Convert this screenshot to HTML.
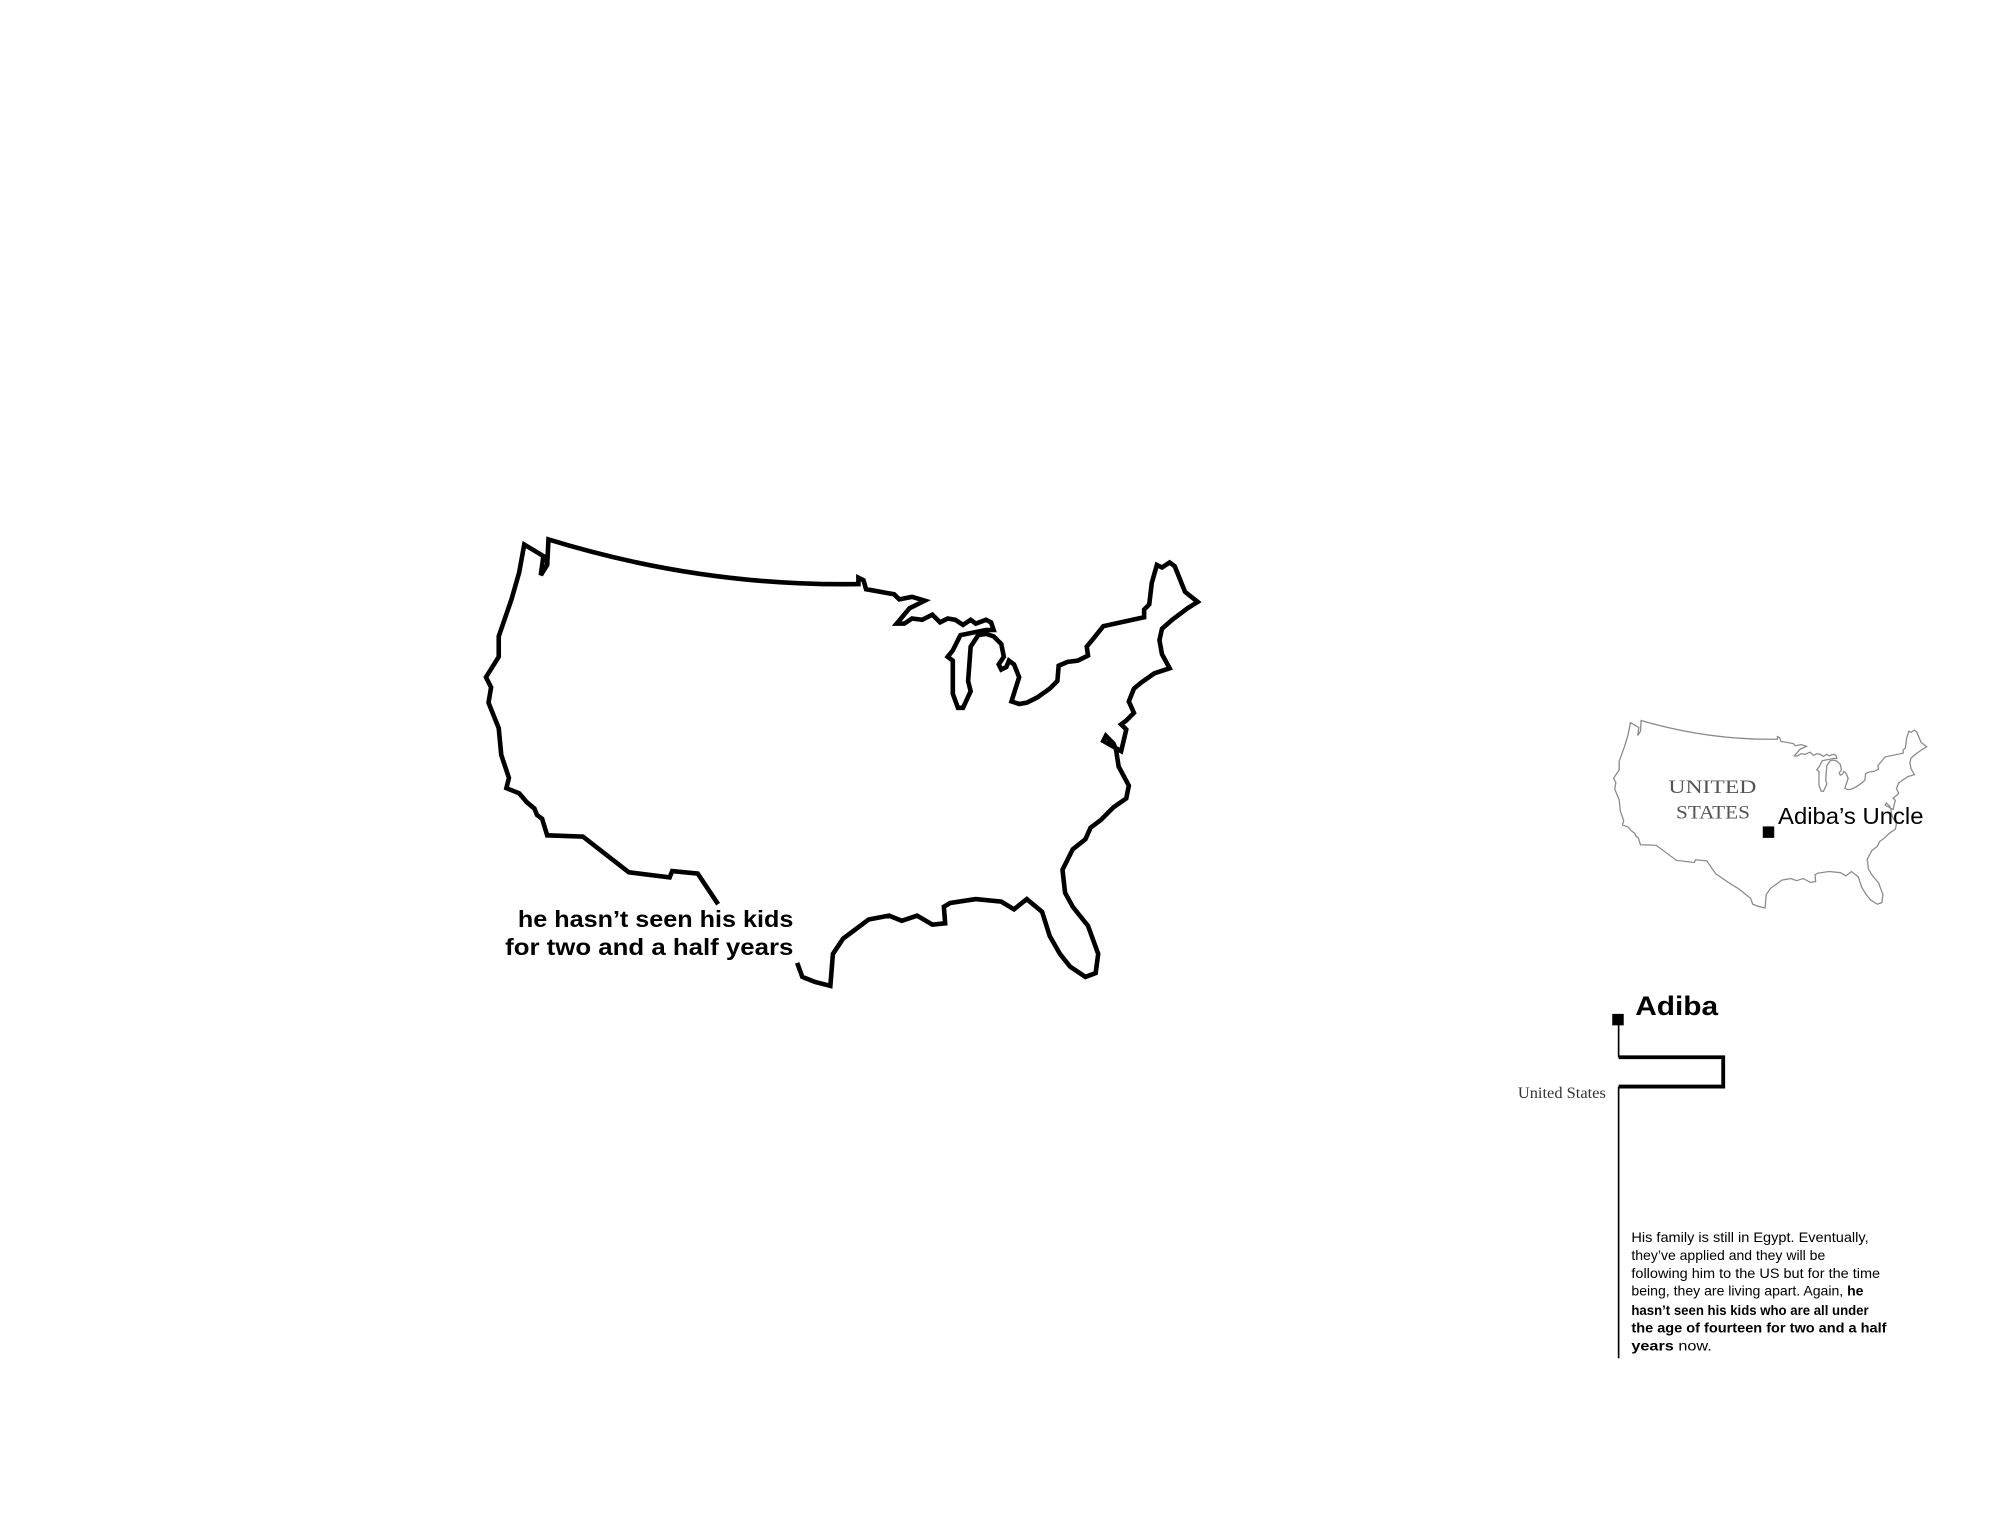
<!DOCTYPE html>
<html><head><meta charset="utf-8"><style>
html,body{margin:0;padding:0;background:#fff;}
svg{display:block;}
</style></head><body>
<svg width="2000" height="1524" viewBox="0 0 1568 1195" preserveAspectRatio="none" xmlns="http://www.w3.org/2000/svg">
<defs>
<path id="us" d="M563,709 L547,685 L527,683 L525,688 L493,684 L457,656 L429,655 L425,642 L421,639 L419,634 L413,629 L407,622 L397,618 L399,610 L393,592 L391,571 L383,551 L385,539 L381,531 L391,515 L391,499 L401,470 L407,449 L411,427 L426,436 L424,451 L429,443 L430,423 Q550,460 673,458 L673,453 L677,455 L679,462 L701,466 L705,470 L715,468 L725,471 L713,477 L703,489 L709,489 L715,485 L723,486 L731,482 L737,488 L743,485 L749,486 L755,490 L761,486 L765,489 L773,486 L777,488 L779,494 L773,494 L753,498 L747,510 L743,515 L747,518 L747,544 L751,555 L755,555 L761,542 L759,534 L761,507 L767,498 L773,497 L779,499 L785,505 L787,515 L783,521 L785,525 L789,523 L791,518 L795,521 L799,531 L793,550 L799,552 L805,551 L813,547 L823,540 L829,534 L830,522 L837,519 L845,518 L853,514 L852,507 L857,501 L865,491 L897,484 L897,478 L901,474 L903,457 L907,443 L911,445 L917,441 L921,444 L929,464 L939,472 L931,477 L919,486 L911,493 L909,502 L911,513 L917,524 L911,526 L905,528 L895,535 L889,540 L885,550 L889,559 L883,565 L879,568 L883,572 L879,589 L865,581 L867,577 L873,583 L875,588 L877,601 L885,616 L883,626 L873,633 L863,643 L855,649 L851,658 L841,666 L833,682 L835,700 L841,711 L853,726 L861,748 L859,763 L851,766 L845,762 L839,758 L831,748 L823,734 L817,715 L805,705 L795,713 L785,707 L765,705 L745,708 L740,711 L741,724 L731,725 L719,718 L707,722 L697,718 L681,721 L661,736 L653,748 L651,773 L639,770 L629,766 L625,755"/>
</defs>
<use href="#us" fill="none" stroke="#000" stroke-width="3.6" stroke-linejoin="miter"/>
<text x="622" y="727" text-anchor="end" font-family="Liberation Sans, sans-serif" font-weight="bold" font-size="18" textLength="216" lengthAdjust="spacingAndGlyphs">he hasn’t seen his kids</text>
<text x="622" y="749" text-anchor="end" font-family="Liberation Sans, sans-serif" font-weight="bold" font-size="18" textLength="226" lengthAdjust="spacingAndGlyphs">for two and a half years</text>

<g transform="translate(1097.4,387.3) scale(0.44,0.42)">
<use href="#us" fill="none" stroke="#8a8a8a" stroke-width="2.3"/>
<path d="M625,755 L605,738 L585,725 L563,709" fill="none" stroke="#8a8a8a" stroke-width="2.3"/>
</g>
<text x="1308" y="622" font-family="Liberation Serif, serif" font-size="15" fill="#555" textLength="69" lengthAdjust="spacingAndGlyphs">UNITED</text>
<text x="1314" y="642" font-family="Liberation Serif, serif" font-size="15" fill="#555" textLength="58" lengthAdjust="spacingAndGlyphs">STATES</text>
<rect x="1382" y="648" width="9" height="9" fill="#000"/>
<text x="1394" y="646" font-family="Liberation Sans, sans-serif" font-size="18" textLength="114" lengthAdjust="spacingAndGlyphs">Adiba’s Uncle</text>

<text x="1282" y="796" font-family="Liberation Sans, sans-serif" font-weight="bold" font-size="21" textLength="65" lengthAdjust="spacingAndGlyphs">Adiba</text>
<rect x="1264" y="795" width="9" height="9" fill="#000"/>
<path d="M1269,804 V829" stroke="#000" stroke-width="1.3" fill="none"/>
<path d="M1269,829 H1351 V852 H1269" stroke="#000" stroke-width="3" fill="none"/>
<path d="M1269,852 V1065" stroke="#000" stroke-width="1.3" fill="none"/>
<text x="1190" y="861" font-family="Liberation Serif, serif" font-size="12" fill="#333" textLength="69" lengthAdjust="spacingAndGlyphs">United States</text>

<g font-family="Liberation Sans, sans-serif" font-size="11" fill="#000">
<text x="1279" y="974" textLength="186" lengthAdjust="spacingAndGlyphs">His family is still in Egypt. Eventually,</text>
<text x="1279" y="988" textLength="152" lengthAdjust="spacingAndGlyphs">they’ve applied and they will be</text>
<text x="1279" y="1002" textLength="195" lengthAdjust="spacingAndGlyphs">following him to the US but for the time</text>
<text x="1279" y="1016" textLength="182" lengthAdjust="spacingAndGlyphs">being, they are living apart. Again, <tspan font-weight="bold">he</tspan></text>
<text x="1279" y="1031" font-weight="bold" textLength="186" lengthAdjust="spacingAndGlyphs">hasn’t seen his kids who are all under</text>
<text x="1279" y="1045" font-weight="bold" textLength="200" lengthAdjust="spacingAndGlyphs">the age of fourteen for two and a half</text>
<text x="1279" y="1059" textLength="63" lengthAdjust="spacingAndGlyphs"><tspan font-weight="bold">years</tspan> now.</text>
</g>
</svg>
</body></html>
